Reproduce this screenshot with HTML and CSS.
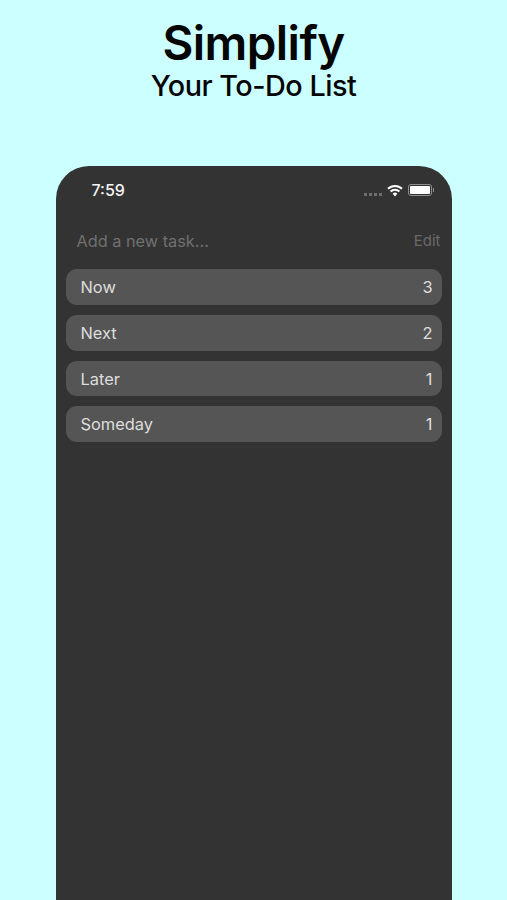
FILE: index.html
```html
<!DOCTYPE html>
<html lang="en">
<head>
    <meta charset="UTF-8">
    <meta name="viewport" content="width=device-width, initial-scale=1.0">
    <title>Simplify</title>
    <link rel="stylesheet" href="styles.css">
</head>
<body>
    <header class="promo">
        <h1>Simplify</h1>
        <h2>Your To-Do List</h2>
    </header>

    <div class="phone">
        <div class="status-bar">
            <span class="time">7:59</span>
            <div class="status-icons">
                <div class="signal">
                    <span></span><span></span><span></span><span></span>
                </div>
                <svg class="wifi" width="16" height="13" viewBox="0 0 16 13">
                    <path d="M1 4.8 A10 10 0 0 1 15 4.8" fill="none" stroke="#fff" stroke-width="2"/>
                    <path d="M3.6 7.5 A6.2 6.2 0 0 1 12.4 7.5" fill="none" stroke="#fff" stroke-width="2"/>
                    <path d="M5.7 9.7 A3.2 3.2 0 0 1 10.3 9.7 L8 12.6 Z" fill="#fff"/>
                </svg>
                <div class="battery">
                    <div class="battery-fill"></div>
                </div>
                <div class="battery-cap"></div>
            </div>
        </div>

        <div class="add-row">
            <span class="placeholder">Add a new task...</span>
            <span class="edit">Edit</span>
        </div>

        <div class="list">
            <div class="row"><span>Now</span><span>3</span></div>
            <div class="row"><span>Next</span><span>2</span></div>
            <div class="row"><span>Later</span><span>1</span></div>
            <div class="row"><span>Someday</span><span>1</span></div>
        </div>
    </div>
</body>
</html>
```

FILE: styles.css
```css
* {
    box-sizing: border-box;
    font-family: Inter, 'Liberation Sans', sans-serif;
}

html, body {
    height: 100%;
}

body {
    margin: 0;
    background-color: #ccffff;
    display: flex;
    flex-direction: column;
    align-items: center;
    overflow: hidden;
}

.promo {
    text-align: center;
    color: #050505;
    padding-top: 17px;
    height: 166px;
    flex-shrink: 0;
}

h1 {
    margin: 0;
    font-size: 47.5px;
    line-height: 52px;
    font-weight: 600;
    letter-spacing: -0.6px;
}

h2 {
    margin: 0;
    font-size: 28.8px;
    line-height: 34px;
    font-weight: 500;
    letter-spacing: -0.5px;
}

.phone {
    width: 396px;
    flex-grow: 1;
    background-color: #333333;
    border-radius: 33px 33px 0 0;
    padding: 0 10px;
}

.status-bar {
    display: flex;
    justify-content: space-between;
    align-items: center;
    height: 48px;
    padding: 0 8px 0 26px;
}

.time {
    color: #f5f5f5;
    font-size: 16px;
    font-weight: 500;
}

.status-icons {
    display: flex;
    align-items: center;
}

.signal {
    display: flex;
    gap: 2px;
    margin: 9px 5px 0 0;
}

.signal span {
    width: 3px;
    height: 3px;
    background-color: #6e6e6e;
}

.wifi {
    margin-right: 5px;
}

.battery {
    width: 24px;
    height: 12px;
    border: 1px solid #8f8f8f;
    border-radius: 3px;
    padding: 1px;
}

.battery-fill {
    height: 100%;
    background-color: #fff;
    border-radius: 1px;
}

.battery-cap {
    width: 1px;
    height: 4px;
    margin-left: 1px;
    background-color: #8f8f8f;
}

.add-row {
    display: flex;
    justify-content: space-between;
    align-items: center;
    height: 55.3px;
    padding: 0 1px 2px 11px;
}

.placeholder {
    color: #707070;
    font-size: 16.3px;
}

.edit {
    color: #6a6a6a;
    font-size: 15px;
}

.list {
    display: flex;
    flex-direction: column;
    gap: 10px;
}

.row {
    display: flex;
    justify-content: space-between;
    align-items: center;
    height: 35.7px;
    padding: 0 9px 0 15px;
    background-color: #555555;
    border-radius: 11px;
    color: #dedede;
    font-size: 16.4px;
}
```
